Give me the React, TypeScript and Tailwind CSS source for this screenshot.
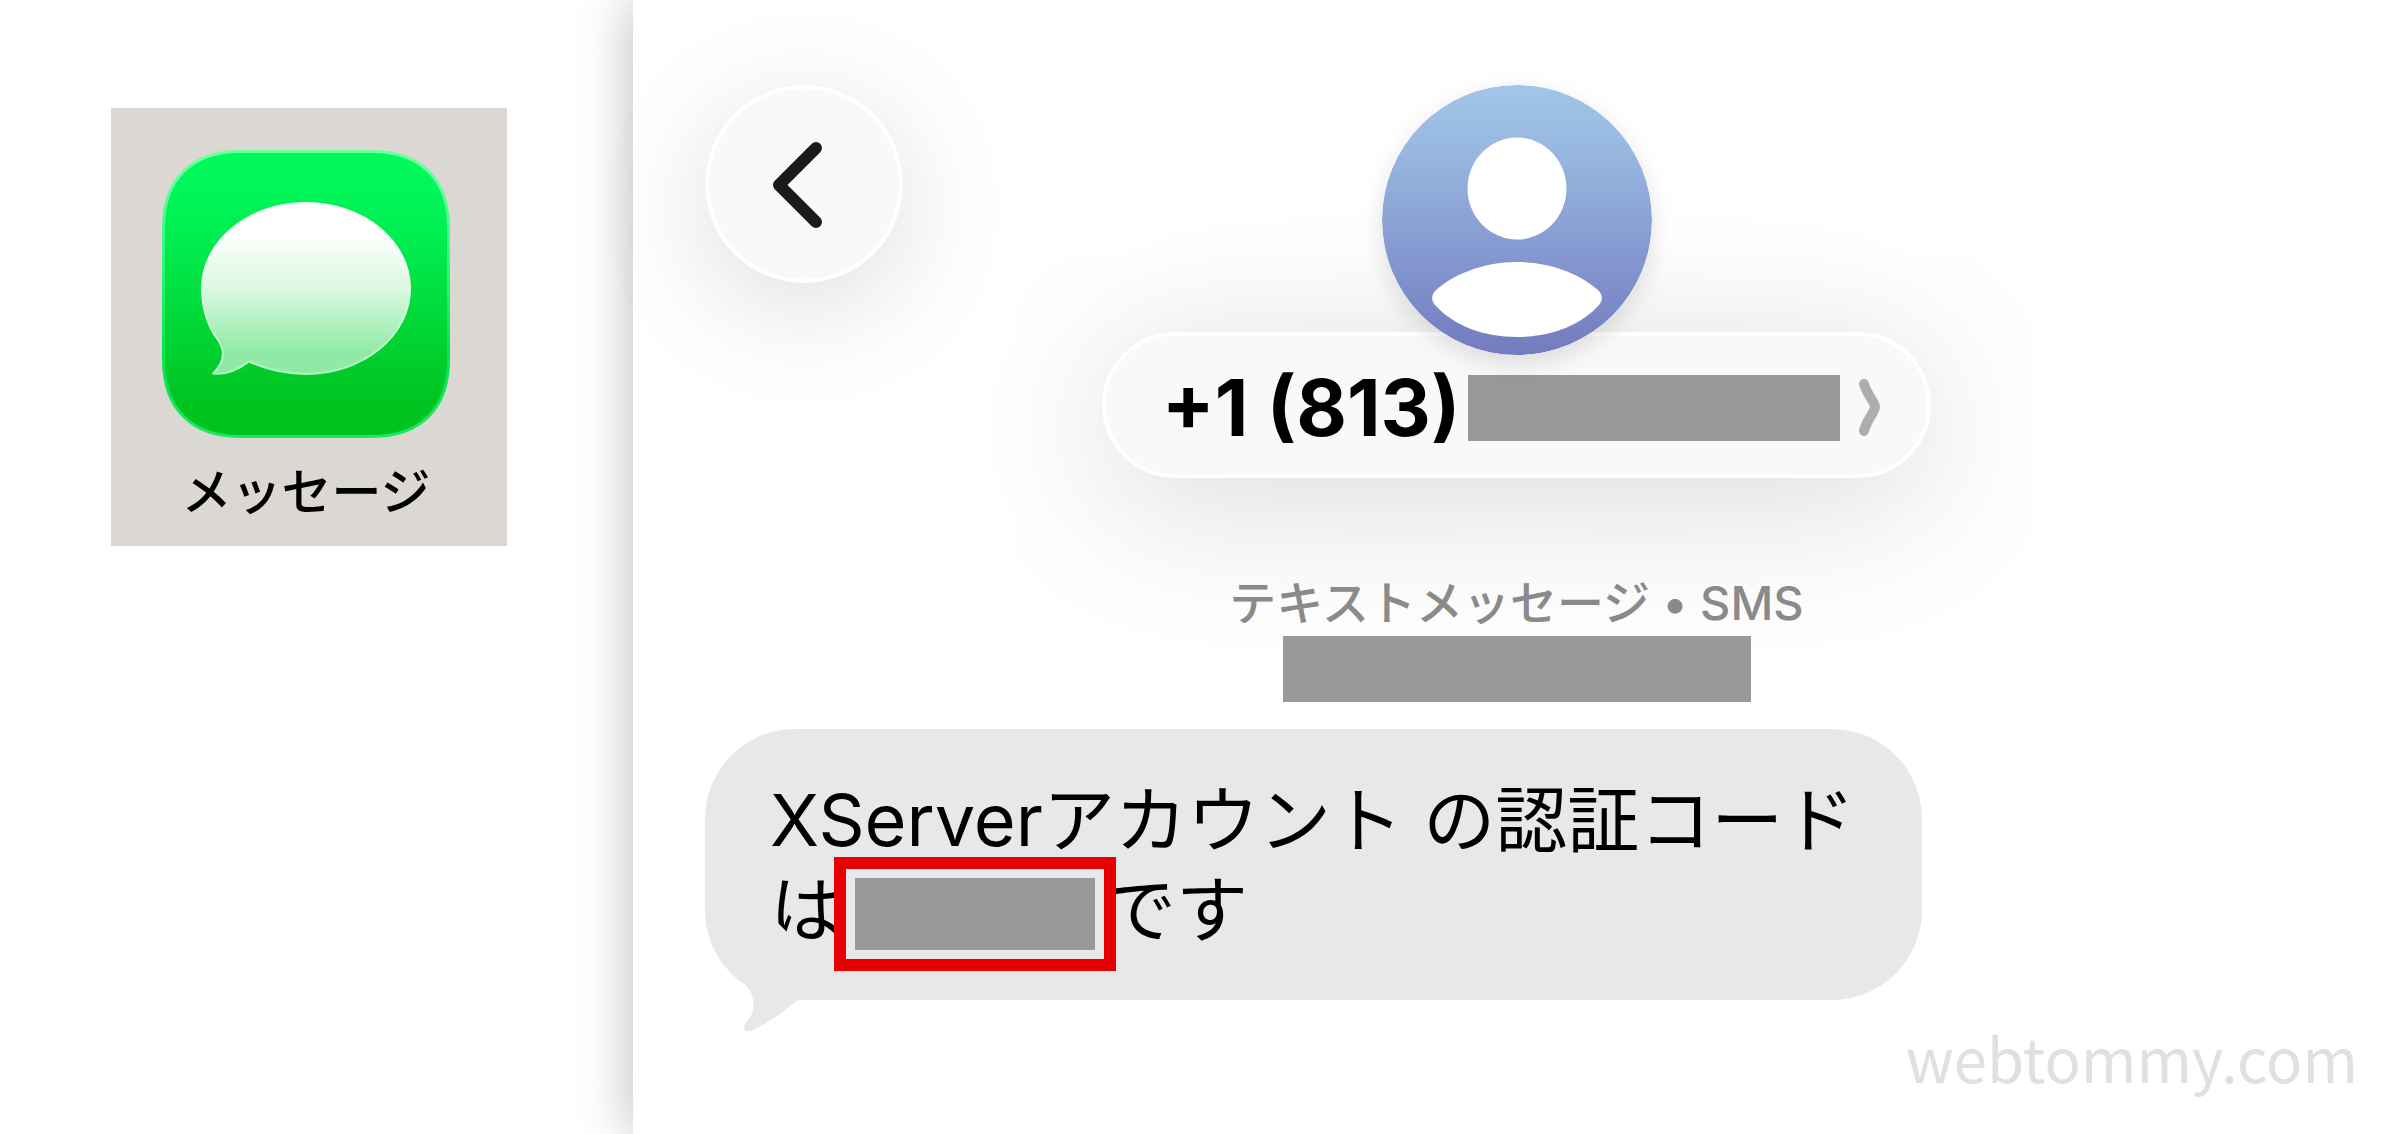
interface RedactedProps {
  className: string;
}

const Redacted: React.FC<RedactedProps> = ({ className }) => (
  <span aria-hidden="true" className={`block bg-[#999999] ${className}`} />
);

const MessagesIcon = () => (
  <svg className="size-72" viewBox="0 0 288 288" aria-hidden="true">
    <defs>
      <linearGradient id="app-bg" x1="0" y1="0" x2="0" y2="1">
        <stop offset="0.08" stopColor="#00f85c" />
        <stop offset="0.3" stopColor="#00ee50" />
        <stop offset="0.88" stopColor="#00c320" />
      </linearGradient>
      <linearGradient id="app-rim" x1="0" y1="0" x2="0" y2="1">
        <stop offset="0" stopColor="#6dff9a" />
        <stop offset="0.3" stopColor="#3dff86" />
        <stop offset="0.7" stopColor="#00e84e" />
        <stop offset="1" stopColor="#1be666" />
      </linearGradient>
      <linearGradient id="bubble-fill" x1="0" y1="0" x2="0" y2="1">
        <stop offset="0.18" stopColor="#ffffff" />
        <stop offset="0.5" stopColor="#d9f9df" />
        <stop offset="0.88" stopColor="#90eaa5" />
      </linearGradient>
      <linearGradient id="bubble-rim" x1="0" y1="0" x2="0" y2="1">
        <stop offset="0.3" stopColor="#ffffff" />
        <stop offset="1" stopColor="#aaf8bd" />
      </linearGradient>
    </defs>
    <path
      d="M78 1.500H210C259 1.500 286.500 30 286.500 78V210C286.500 258 259 286.500 210 286.500H78C29 286.500 1.500 258 1.500 210V78C1.500 30 29 1.500 78 1.500Z"
      fill="url(#app-bg)"
      stroke="url(#app-rim)"
      strokeWidth="3"
    />
    <path
      d="M144 53C201 53 248 91 248 138.500C248 186 201 224 144 224C123 224 103.500 219 87 211.500C76 220 64 225 51 223.500C61 214 65 203 56 190C46 177 40 158 40 138.500C40 91 87 53 144 53Z"
      fill="url(#bubble-fill)"
      stroke="url(#bubble-rim)"
      strokeWidth="2"
      strokeLinejoin="round"
    />
  </svg>
);

const Avatar = () => (
  <svg
    className="relative size-[270px] rounded-full shadow-[0_8px_24px_rgba(0,0,0,0.12)]"
    viewBox="0 0 270 270"
    aria-hidden="true"
  >
    <defs>
      <linearGradient id="avatar-bg" x1="0" y1="0" x2="0" y2="1">
        <stop offset="0" stopColor="#a2c5e8" />
        <stop offset="0.25" stopColor="#97b7df" />
        <stop offset="1" stopColor="#727bbf" />
      </linearGradient>
    </defs>
    <circle cx="135" cy="135" r="135" fill="url(#avatar-bg)" />
    <ellipse cx="135" cy="103.500" rx="49.500" ry="51" fill="#fff" />
    <path
      d="M135 177C170 177 199 190 216 205C221 210 221 215 217 220C198 241 168 252 135 252C102 252 72 241 53 220C49 215 49 210 54 205C71 190 100 177 135 177Z"
      fill="#fff"
    />
  </svg>
);

const App = () => {
  return (
    <div className="flex min-h-screen overflow-hidden bg-white font-[Inter,'Noto_Sans_CJK_JP',sans-serif] text-black">
      <aside className="w-[633px] shrink-0 pt-[108px] pl-[111px]">
        <a
          href="#messages"
          className="flex w-[396px] flex-col items-center bg-[#dbd7d3] pt-[42px] pr-[6px] pb-[22px]"
        >
          <MessagesIcon />
          <span className="mt-[22px] text-[50px] leading-[64px] font-medium">
            メッセージ
          </span>
        </a>
      </aside>

      <main className="flex flex-1 flex-col bg-white shadow-[0_0_52px_rgba(0,0,0,0.28)]">
        <header className="grid grid-cols-[1fr_auto_1fr] items-start px-[72px] pt-[85px]">
          <button
            type="button"
            aria-label="戻る"
            className="flex size-[198px] items-center justify-center rounded-full border-4 border-white bg-[#f9f9f9] shadow-[0_24px_120px_rgba(0,0,0,0.14)]"
          >
            <svg
              className="h-[88px] w-16"
              viewBox="0 0 64 88"
              fill="none"
              stroke="#1a1a1a"
              strokeWidth="12"
              strokeLinecap="round"
              strokeLinejoin="round"
              aria-hidden="true"
            >
              <path d="M44 8L7 45L44 82" />
            </svg>
          </button>

          <div className="flex flex-col items-center">
            <Avatar />
            <button
              type="button"
              className="-mt-[23px] flex h-[146px] items-center rounded-full border-4 border-white bg-[#f9f9f9] pt-[5px] pr-[45px] pl-[56px] shadow-[0_24px_160px_rgba(0,0,0,0.16)]"
            >
              <span className="text-[78px] leading-[90px] font-bold whitespace-nowrap">
                +1 (813)
              </span>
              <Redacted className="ml-2 h-[66px] w-[372px]" />
              <svg
                className="ml-[18px] h-[60px] w-6"
                viewBox="0 0 24 60"
                fill="none"
                stroke="#adadad"
                strokeWidth="10"
                strokeLinecap="round"
                strokeLinejoin="round"
                aria-hidden="true"
              >
                <path d="M6 6C9 17 17 24 17 29C17 34 9 41 6 53" />
              </svg>
            </button>
          </div>
        </header>

        <div className="relative mt-[95px] flex flex-col items-center">
          <p className="mb-[3px] text-[47px] leading-[60px] font-medium text-[#8a8a8a]">
            テキストメッセージ • SMS
          </p>
          <Redacted className="h-[66px] w-[468px]" />
        </div>

        <div className="relative mx-[72px] mt-[27px] self-start rounded-[90px] bg-[#e8e8ea] pt-[46px] pr-[67px] pb-[45px] pl-[65px]">
          <p className="text-[72px] leading-[90px]">
            XServerアカウント の認証コード
          </p>
          <p className="flex h-[90px] items-center text-[72px] leading-[90px]">
            は
            <span className="relative mt-2 -mr-3 -ml-2 border-12 border-[#e60000] p-[9px]">
              <Redacted className="h-[72px] w-[240px]" />
            </span>
            です
          </p>
          <svg
            className="absolute -bottom-8 left-0 h-[132px] w-[110px]"
            viewBox="0 0 110 132"
            fill="#e8e8ea"
            aria-hidden="true"
          >
            <path d="M4 24C10 50 24 69 40 84C51 95 51 112 42 121C37 126 39 133 46 131C64 123 78 112 90 102C93 100 96 100 102 100L110 60L60 10Z" />
          </svg>
        </div>

        <p className="mt-auto self-end pr-[42px] pb-[37px] font-['Noto_Sans_CJK_JP',sans-serif] text-[60px] leading-[80px] text-[#e0e0e0]">
          webtommy.com
        </p>
      </main>
    </div>
  );
};

export default App;
